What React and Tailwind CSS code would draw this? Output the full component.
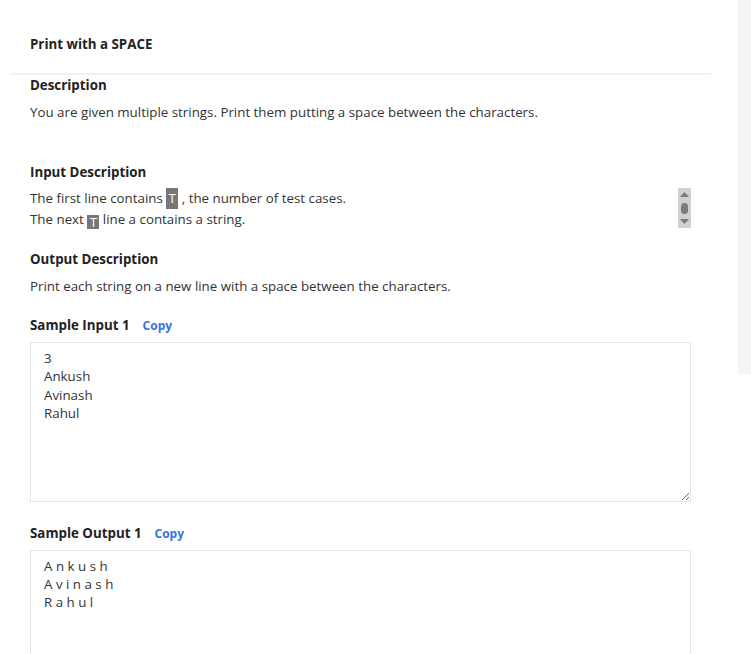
import React from 'react'

const font = { fontFamily: '"Open Sans", "Noto Sans", sans-serif' }

function Code({ children, first }) {
  return (
    <span
      className={`inline-block bg-[#777] text-white w-[12px] text-center ${
        first ? 'h-[21px] leading-[20px] align-top' : 'h-[14px] leading-[14px] align-bottom'
      }`}
    >
      {children}
    </span>
  )
}

function Heading({ children, copy }) {
  return (
    <div className="flex items-center gap-[13px] h-[18px]">
      <h3 className="text-[13.33px] font-bold text-[#222]">{children}</h3>
      {copy && <button className="text-[12px] font-bold text-[#3573e0]">Copy</button>}
    </div>
  )
}

function ScrollNub() {
  return (
    <div className="w-[13px] h-[40px] bg-[#d0d0d0] flex flex-col items-center justify-between py-[4px]">
      <svg width="9" height="5" viewBox="0 0 9 5"><path d="M4.5 0L9 5H0Z" fill="#7b7b7b" /></svg>
      <div className="w-[7px] h-[11px] rounded-full bg-[#7b7b7b]" />
      <svg width="9" height="5" viewBox="0 0 9 5"><path d="M0 0H9L4.5 5Z" fill="#7b7b7b" /></svg>
    </div>
  )
}

export default function App() {
  const input = '3\nAnkush\nAvinash\nRahul'
  const output = 'A n k u s h\nA v i n a s h\nR a h u l'
  return (
    <div className="flex items-start h-[654px] overflow-hidden bg-white" style={font}>
      <div className="w-[738px]">
        <div className="pl-[30px] pt-[36px] h-[73px]">
          <h2 className="text-[13.33px] font-bold text-[#222] leading-[16px]">Print with a SPACE</h2>
        </div>
        <div className="ml-[10px] w-[701px] h-[2px] bg-[#eef2f6]" />

        <div className="pl-[30px] w-[691px] pt-[2px]">
          <Heading>Description</Heading>
          <p className="mt-[7px] text-[13.33px] leading-[20px] text-[#333]">
            You are given multiple strings. Print them putting a space between the characters.
          </p>

          <div className="mt-[42px]">
            <Heading>Input Description</Heading>
          </div>
          <div className="mt-[6px] flex items-start justify-between">
            <div className="text-[13.33px] leading-[20px] text-[#333]">
              <div>The first line contains <Code first>T</Code> , the number of test cases.</div>
              <div>The next <Code>T</Code> line a contains a string.</div>
            </div>
            <ScrollNub />
          </div>

          <div className="mt-[22px]">
            <Heading>Output Description</Heading>
          </div>
          <p className="mt-[7px] text-[13.33px] leading-[20px] text-[#333]">
            Print each string on a new line with a space between the characters.
          </p>

          <div className="mt-[21px]">
            <Heading copy>Sample Input 1</Heading>
          </div>
          <textarea
            readOnly
            value={input}
            className="mt-[7px] block w-[661px] h-[160px] border border-[#e1e6ef] bg-white pl-[13px] pt-[6px] text-[13.33px] leading-[18.3px] text-[#333] outline-none"
          />

          <div className="mt-[23px]">
            <Heading copy>Sample Output 1</Heading>
          </div>
          <textarea
            readOnly
            value={output}
            className="mt-[7px] block w-[661px] h-[160px] border border-[#e1e6ef] bg-white pl-[13px] pt-[6px] text-[13.33px] leading-[18px] text-[#333] outline-none"
          />
        </div>
      </div>
      <div className="w-[13px] h-[374px] bg-[#f5f5f5]" />
    </div>
  )
}
